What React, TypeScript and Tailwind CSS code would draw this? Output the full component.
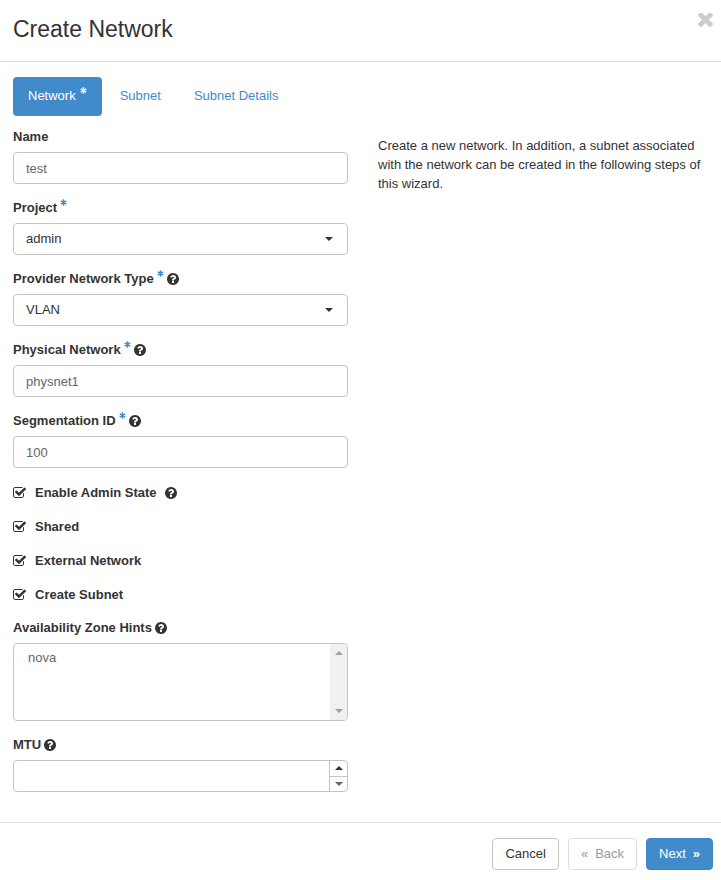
import React, { useState } from 'react';
import clsx from 'clsx';

interface FieldProps {
  id: string;
  label: string;
  required?: boolean;
  help?: boolean;
  children: React.ReactNode;
}

interface CheckOption {
  id: string;
  label: string;
  help?: boolean;
}

const tabs = [
  { id: 'network', label: 'Network', required: true },
  { id: 'subnet', label: 'Subnet' },
  { id: 'details', label: 'Subnet Details' }
];

const checkOptions: CheckOption[] = [
  { id: 'admin_state', label: 'Enable Admin State', help: true },
  { id: 'shared', label: 'Shared' },
  { id: 'external', label: 'External Network' },
  { id: 'with_subnet', label: 'Create Subnet' }
];

const controlClass =
  'block h-8 w-full appearance-none rounded border border-[#c4c4c4] bg-white px-3 text-[13px] outline-none focus:border-[#428bca]';

function Asterisk() {
  return (
    <svg className="mb-[10px] h-[7px] w-[7px] shrink-0" viewBox="0 0 14 14" fill="none" stroke="currentColor" strokeWidth={3} aria-hidden="true">
      <path d="M7 0.5v13M1.4 3.8l11.2 6.4M1.4 10.2l11.2-6.4" />
    </svg>
  );
}

function HelpIcon() {
  return (
    <svg className="h-3 w-3 shrink-0" viewBox="128 128 1536 1536" fill="currentColor" aria-hidden="true">
      <path d="M1024 1376v-192q0-14-9-23t-23-9h-192q-14 0-23 9t-9 23v192q0 14 9 23t23 9h192q14 0 23-9t9-23zm256-672q0-88-55.5-163t-138.5-116-170-41q-243 0-371 213-15 24 8 42l132 100q7 6 19 6 16 0 25-12 53-68 86-92 34-24 86-24 48 0 85.5 26t37.5 59q0 38-20 61t-68 45q-63 28-115.5 86.5t-52.5 125.5v36q0 14 9 23t23 9h192q14 0 23-9t9-23q0-19 21.5-49.5t54.5-49.5q32-18 49-28.5t46-35 44.5-48 28-60.5 12.5-81zm384 192q0 209-103 385.5t-279.5 279.5-385.5 103-385.5-103-279.5-279.5-103-385.5 103-385.5 279.5-279.5 385.5-103 385.5 103 279.5 279.5 103 385.5z" />
    </svg>
  );
}

function Caret({ up, className }: { up?: boolean; className?: string }) {
  return (
    <svg className={clsx('h-1 w-2', className)} viewBox="0 0 8 4" fill="currentColor" aria-hidden="true">
      <path d={up ? 'M0 4l4-4 4 4z' : 'M0 0h8l-4 4z'} />
    </svg>
  );
}

function Field({ id, label, required, help, children }: FieldProps) {
  return (
    <div className="mb-[14px]">
      <label htmlFor={id} className="mb-[6px] flex h-[19px] items-center gap-[3px] font-bold">
        {label}
        {required && <span className="text-[#428bca]"><Asterisk /></span>}
        {help && <HelpIcon />}
      </label>
      {children}
    </div>
  );
}

function SelectBox({ id, options }: { id: string; options: string[] }) {
  return (
    <div className="grid items-center">
      <select id={id} className={clsx(controlClass, 'col-start-1 row-start-1 pb-0.5')}>
        {options.map((option) => (
          <option key={option}>{option}</option>
        ))}
      </select>
      <Caret className="pointer-events-none col-start-1 row-start-1 mr-[15px] justify-self-end" />
    </div>
  );
}

function CheckBox({ id, label, help }: CheckOption) {
  const [checked, setChecked] = useState(true);

  return (
    <div className="flex h-[19px] items-center font-bold">
      <span className="grid h-3 w-[13px] shrink-0">
        <input
          id={id}
          type="checkbox"
          checked={checked}
          onChange={(e) => setChecked(e.target.checked)}
          className="col-start-1 row-start-1 h-3 w-[13px] appearance-none"
        />
        <svg className="pointer-events-none col-start-1 row-start-1 h-3 w-[13px]" viewBox="64 128 1664 1536" fill="currentColor" aria-hidden="true">
          <path d="M1472 930v318q0 119-84.5 203.5t-203.5 84.5h-832q-119 0-203.5-84.5t-84.5-203.5v-832q0-119 84.5-203.5t203.5-84.5h832q63 0 117 25 15 7 18 23 3 17-9 29l-49 49q-10 10-23 10-3 0-9-2-23-6-45-6h-832q-66 0-113 47t-47 113v832q0 66 47 113t113 47h832q66 0 113-47t47-113v-254q0-13 9-22l64-64q10-10 23-10 6 0 12 3 20 8 20 29z" />
          {checked && (
            <path d="M1703 441l-814 814q-24 24-57 24t-57-24l-430-430q-24-24-24-57t24-57l110-110q24-24 57-24t57 24l263 263 647-647q24-24 57-24t57 24l110 110q24 24 24 57t-24 57z" />
          )}
        </svg>
      </span>
      <label htmlFor={id} className="ml-[9px]">{label}</label>
      {help && <span className="ml-2"><HelpIcon /></span>}
    </div>
  );
}

export default function App() {
  const [activeTab, setActiveTab] = useState('network');
  const [mtu, setMtu] = useState('');

  const stepMtu = (delta: number) => {
    setMtu(String(Math.max(0, Number(mtu) + delta)));
  };

  return (
    <div className="bg-white font-['Liberation_Sans',Arial,sans-serif] text-[13px] leading-[19px] text-[#333333]">
      {/* Header */}
      <header className="flex items-start justify-between border-b border-[#e0e0e0] pt-[13px] pr-[6px] pb-4 pl-[13px]">
        <h1 className="text-[23px] leading-8">Create Network</h1>
        <button type="button" aria-label="Close" className="text-[#cccccc] hover:text-gray-500">
          <svg className="h-[15px] w-[19px]" viewBox="302 434 1188 1188" fill="currentColor" aria-hidden="true">
            <path d="M1490 1322q0 40-28 68l-136 136q-28 28-68 28t-68-28l-294-294-294 294q-28 28-68 28t-68-28l-136-136q-28-28-28-68t28-68l294-294-294-294q-28-28-28-68t28-68l136-136q28-28 68-28t68 28l294 294 294-294q28-28 68-28t68 28l136 136q28 28 28 68t-28 68l-294 294 294 294q28 28 28 68z" />
          </svg>
        </button>
      </header>

      {/* Wizard steps */}
      <main className="pt-[15px] pr-2 pb-4 pl-[13px]">
        <nav className="flex gap-[3px]">
          {tabs.map((tab) => (
            <a
              key={tab.id}
              href={`#${tab.id}`}
              onClick={() => setActiveTab(tab.id)}
              className={clsx(
                'flex h-[39px] items-center gap-1 rounded px-[15px] pb-0.5',
                activeTab === tab.id ? 'bg-[#428bca] text-white' : 'text-[#428bca]'
              )}
            >
              {tab.label}
              {tab.required && <Asterisk />}
            </a>
          ))}
        </nav>

        <div className="mt-[11px] grid grid-cols-2 gap-[30px]">
          <form>
            <Field id="name" label="Name">
              <input id="name" type="text" defaultValue="test" className={clsx(controlClass, 'text-[#666666]')} />
            </Field>
            <Field id="project" label="Project" required>
              <SelectBox id="project" options={['admin']} />
            </Field>
            <Field id="network_type" label="Provider Network Type" required help>
              <SelectBox id="network_type" options={['VLAN']} />
            </Field>
            <Field id="physical_network" label="Physical Network" required help>
              <input id="physical_network" type="text" defaultValue="physnet1" className={clsx(controlClass, 'text-[#666666]')} />
            </Field>
            <Field id="segmentation_id" label="Segmentation ID" required help>
              <input id="segmentation_id" type="text" defaultValue="100" className={clsx(controlClass, 'text-[#666666]')} />
            </Field>

            <div className="mb-[14px] space-y-[15px] pt-px">
              {checkOptions.map((option) => (
                <CheckBox key={option.id} {...option} />
              ))}
            </div>

            <Field id="az_hints" label="Availability Zone Hints" help>
              <div className="flex h-[78px] overflow-hidden rounded border border-[#c4c4c4]">
                <select id="az_hints" multiple size={4} className="min-w-0 flex-1 appearance-none overflow-hidden px-[14px] py-[6px] text-[#666666] outline-none">
                  <option>nova</option>
                </select>
                <div className="flex w-[17px] flex-col items-center justify-between bg-[#f0f0f0] py-[7px] text-[#a0a0a0]">
                  <Caret up />
                  <Caret />
                </div>
              </div>
            </Field>

            <Field id="mtu" label="MTU" help>
              <div className="flex h-8 rounded border border-[#c4c4c4]">
                <input
                  id="mtu"
                  type="text"
                  inputMode="numeric"
                  value={mtu}
                  onChange={(e) => setMtu(e.target.value)}
                  className="min-w-0 flex-1 px-3 text-[#666666] outline-none"
                />
                <div className="flex w-[18px] flex-col border-l border-[#c4c4c4]">
                  <button type="button" aria-label="Increase" onClick={() => stepMtu(1)} className="flex flex-1 items-center justify-center border-b border-[#c4c4c4]">
                    <Caret up />
                  </button>
                  <button type="button" aria-label="Decrease" onClick={() => stepMtu(-1)} className="flex flex-1 items-center justify-center text-[#666666]">
                    <Caret />
                  </button>
                </div>
              </div>
            </Field>
          </form>

          <p className="pt-[9px]">
            Create a new network. In addition, a subnet associated with the network can be created in the following steps of this wizard.
          </p>
        </div>
      </main>

      {/* Footer */}
      <footer className="flex justify-end gap-[9px] border-t border-[#e0e0e0] pt-[15px] pr-2 pb-[10px]">
        <button type="button" className="h-8 rounded border border-[#c4c4c4] px-3 pb-0.5">Cancel</button>
        <button type="button" disabled className="flex h-8 items-center gap-[7px] rounded border border-[#dcdcdc] px-3 pb-0.5 text-[#999999]">
          <span>«</span>Back
        </button>
        <button type="button" className="flex h-8 items-center gap-[7px] rounded border border-[#3b85c5] bg-[#428bca] px-3 pb-0.5 text-white">
          Next<span className="font-bold">»</span>
        </button>
      </footer>
    </div>
  );
}
